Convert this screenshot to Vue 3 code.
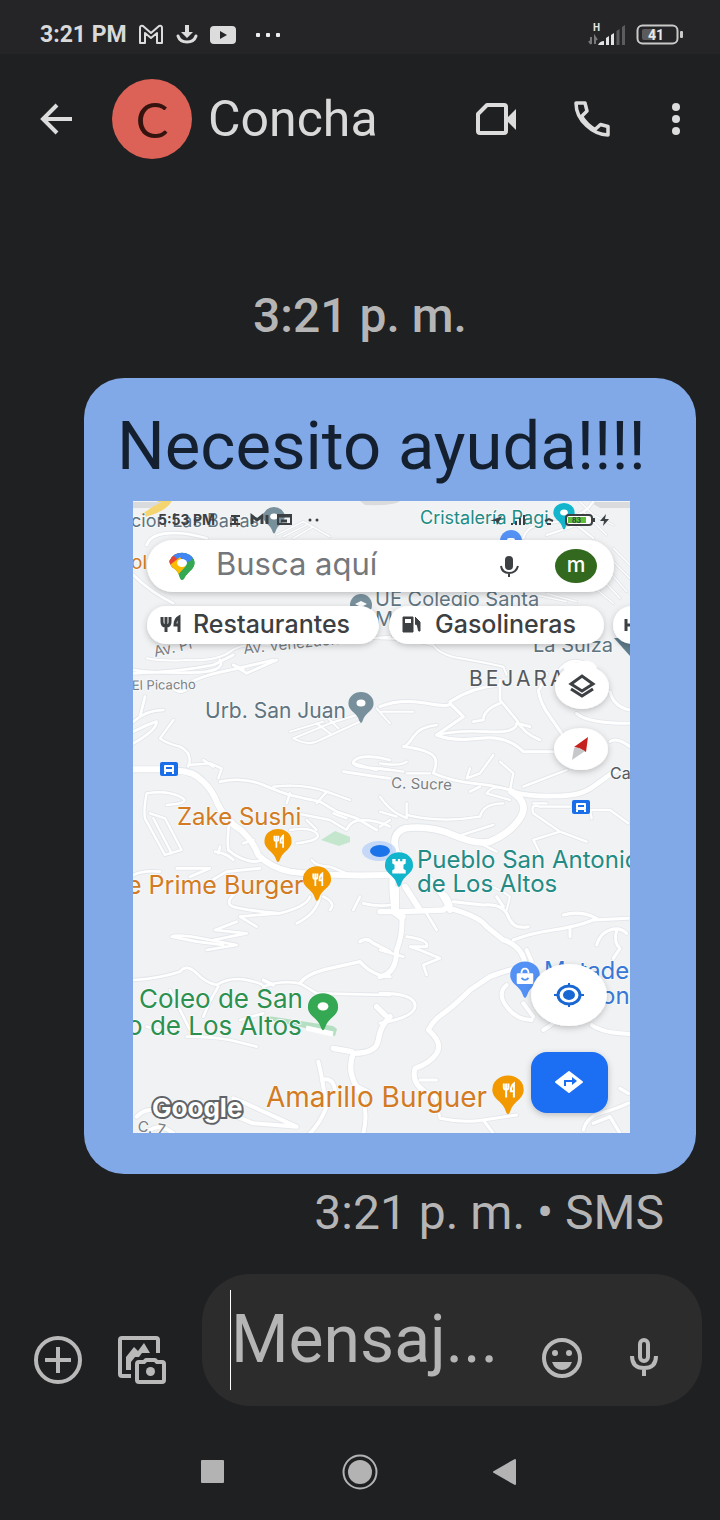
<script setup>
import { ref } from 'vue'

const draft = ref('')

const foodIcon = 'M-7 -9V-4Q-7 -1 -4 -1V9M-4 -9V-1M-1 -9V-4Q-1 -1 -4 -1M6 9V-9Q2 -6 2 1H6'

// Street network, split into sectors; each sector has its own origin on the map.
const sectors = [
  {
    x: 130, y: 495,
    roads: [
      { w: 8, d: 'M10 240Q60 290 130 325M50 150Q60 120 110 115T230 130' },
      { w: 6, d: 'M50 490Q100 500 170 495Q260 500 300 470T430 450L600 440L780 425' },
      { w: 8, d: 'M10 535Q150 530 250 510L310 480M310 510L350 535L440 495' },
      { w: 4, d: 'M440 120L520 80L600 125M460 125L530 90M490 130L550 95' },
    ],
  },
  {
    x: 380, y: 495,
    roads: [
      { w: 6, d: 'M0 430Q80 430 160 450Q180 480 240 490T370 515L380 540' },
      { w: 6, d: 'M430 130Q440 90 500 85T590 60Q620 50 640 20M500 120L590 90L640 130' },
      { w: 4, d: 'M470 300L560 320M500 295L590 320M600 20L640 60L700 90M610 50L680 120' },
      { w: 4, d: 'M700 160L750 210M690 190L750 250M680 220L740 290M665 250L720 310M640 275L700 325' },
      { w: 8, d: 'M530 535Q560 490 600 500T660 535' },
    ],
  },
  {
    x: 130, y: 660,
    roads: [
      { w: 18, d: 'M0 328H90M140 332Q190 332 220 365Q250 395 262 430Q290 485 335 512Q370 545 385 585Q420 622 480 635Q600 650 780 645' },
      { w: 8, d: 'M10 30Q70 40 180 38T270 0M180 68Q220 45 310 28L430 0M310 15L340 28M130 85Q150 105 175 85' },
      { w: 8, d: 'M45 110L30 170M10 185Q50 150 100 150M10 215Q60 190 80 185Q80 210 10 250' },
      { w: 7, d: 'M130 180L90 235Q110 250 150 260Q190 280 175 320M175 315L240 310L275 325L265 355M220 300L250 320' },
      { w: 8, d: 'M270 365Q340 350 400 375T480 405T570 425L620 455L680 475L740 510' },
      { w: 7, d: 'M430 380Q520 370 590 395L660 420M480 400L470 430M560 430L590 395M610 460L650 475M780 500Q740 480 700 480T650 510L600 480L500 460' },
      { w: 6, d: 'M490 235L600 190L680 165M490 235Q540 260 570 240L690 185M480 215L580 185M560 190L600 220M590 170L625 205M740 145L780 190' },
      { w: 8, d: 'M780 300Q700 280 675 300T740 325L780 330M640 335L740 350L780 355M670 310L740 330' },
      { w: 7, d: 'M50 400Q110 390 150 410T110 435M50 400Q40 450 45 475L105 585L155 570L105 475L60 460M70 475L125 580' },
      { w: 8, d: 'M300 475Q290 530 295 570Q330 600 370 605L410 600M340 550L370 540M255 575Q290 580 310 600M270 560L265 580' },
      { w: 7, d: 'M480 510Q540 500 560 520T500 550M530 480L560 510M545 600Q560 620 600 620L650 640' },
      { w: 8, d: 'M10 645Q40 630 90 635M140 625L240 625L180 650M230 670L290 635L390 625' },
    ],
  },
  {
    x: 380, y: 660,
    roads: [
      { w: 20, d: 'M50 580Q30 520 75 505Q150 495 220 525T330 545Q390 520 420 475T395 395' },
      { w: 14, d: 'M395 395Q450 410 520 408Q600 410 640 380T710 330' },
      { w: 9, d: 'M0 140Q60 115 140 130T210 125Q280 80 360 75M210 130L250 170L170 225Q220 245 300 235T430 275L520 275' },
      { w: 8, d: 'M170 225Q230 210 320 215T410 190M360 60L360 120L410 180Q430 220 480 240M360 130Q310 150 310 180L280 185M410 190L450 200' },
      { w: 8, d: 'M170 195Q120 200 100 230T70 260Q120 265 150 280T160 340Q220 365 280 370T395 390' },
      { w: 7, d: 'M0 310Q60 320 80 305M0 325L70 335M80 340L150 340M340 285L300 340L260 355M390 390L400 340L360 305M270 325L260 355M430 380L560 330' },
      { w: 9, d: 'M475 90Q480 130 510 170L545 220M480 85L500 40M590 160Q620 190 750 190M690 95Q700 140 750 150M690 245Q710 230 750 260' },
      { w: 7, d: 'M0 410Q20 440 50 460L80 475L80 430M0 455L50 470M80 465Q180 490 300 470Q310 430 370 430M0 500L30 480' },
      { w: 7, d: 'M570 440H480Q450 430 460 460L540 515L460 540L480 580M540 515L620 545M630 450L690 450L745 490M630 450L635 475M460 430L500 430' },
      { w: 7, d: 'M320 400Q340 370 385 390M320 400L390 420M270 395L300 380M230 530L340 495M290 545L350 575' },
      { w: 18, d: 'M55 580Q25 650 45 750M75 680L120 750M150 660Q190 700 210 750' },
      { w: 6, d: 'M300 670Q350 680 390 710L380 750M0 155L100 155' },
    ],
  },
  {
    x: 130, y: 890,
    roads: [
      { w: 8, d: 'M320 5Q280 40 310 50T450 70Q530 50 540 20M330 80Q370 75 450 70M320 95L255 120L350 130M330 80L380 110M350 130L250 150' },
      { w: 8, d: 'M125 140Q140 130 240 150L320 165L230 180M125 140L200 155L280 165M570 20Q560 70 500 100M580 20Q620 40 600 60M690 20L670 60M700 40Q740 50 780 45' },
      { w: 8, d: 'M10 270Q90 265 150 245Q170 220 200 250T260 285Q300 260 350 270T400 290Q450 270 510 280L560 310L780 315' },
      { w: 10, d: 'M510 280Q530 250 600 235L690 215Q730 260 780 260M690 155Q710 140 730 160L780 185M400 270L430 285' },
      { w: 8, d: 'M265 290Q240 330 220 380M120 300L180 420M170 440Q240 440 300 450L380 470M330 390L400 370M50 410L120 430' },
      { w: 16, d: 'M780 380Q750 410 745 450T670 490Q650 540 680 590L720 610M740 350L765 375M610 475L665 485' },
      { w: 12, d: 'M565 515L575 560L590 650Q570 700 540 730M575 570Q610 560 615 600M680 600Q720 650 700 730' },
      { w: 12, d: 'M310 625Q350 640 390 660L500 710L370 700L320 680M20 680Q50 650 80 665M60 720Q90 700 130 730' },
    ],
  },
  {
    x: 380, y: 890,
    roads: [
      { w: 24, d: 'M45 0V60M45 65L65 80' },
      { w: 16, d: 'M0 65H70M170 0Q200 10 210 45L190 60L65 65' },
      { w: 15, d: 'M65 75Q70 130 50 180Q50 250 0 260M210 55Q300 80 320 110L370 150Q430 170 435 225M435 230Q380 240 330 260L270 300Q220 350 190 370T145 420Q190 460 170 490T105 535Q90 590 165 620' },
      { w: 8, d: 'M80 140Q150 150 140 170H90L120 180L180 205L130 225L140 255M0 180L70 200M140 70L170 120' },
      { w: 9, d: 'M0 310Q100 310 105 345T0 400M0 360L20 375M220 35L310 45Q370 40 385 80T445 110M350 20L370 50' },
      { w: 9, d: 'M400 150Q450 130 520 120T640 90L745 85M550 75Q600 60 650 85M570 110V140M650 165Q660 130 690 120T740 130M710 120Q700 160 720 175L700 205' },
      { w: 12, d: 'M380 285Q350 310 380 350T455 390M440 180L455 215M430 340L460 380M520 400L490 420M635 405Q670 430 750 432' },
      { w: 9, d: 'M120 570H170M165 620L180 685Q250 700 310 690L410 675M310 690L340 730' },
      { w: 10, d: 'M610 720Q620 680 660 670T745 640M640 700L690 680L720 730M720 595L745 610' },
    ],
  },
]

const places = [
  { x: 205, y: 718, t: 'Urb. San Juan', c: 'slate', s: 21 },
  { x: 177, y: 825, t: 'Zake Sushi', c: 'orange', s: 24 },
  { x: 127, y: 894, t: 'e Prime Burger', c: 'orange', s: 25 },
  { x: 417, y: 868, t: 'Pueblo San Antonio', c: 'teal', s: 24 },
  { x: 417, y: 892, t: 'de Los Altos', c: 'teal', s: 24 },
  { x: 139, y: 1008, t: 'Coleo de San', c: 'green', s: 26 },
  { x: 127, y: 1035, t: 'o de Los Altos', c: 'green', s: 26 },
  { x: 266, y: 1107, t: 'Amarillo Burguer', c: 'orange', s: 28 },
  { x: 544, y: 979, t: 'Matade', c: 'blue', s: 24 },
  { x: 601, y: 1004, t: 'on', c: 'blue', s: 24 },
  { x: 375, y: 606, t: 'UE Colegio Santa', c: 'slate', s: 20 },
  { x: 375, y: 626, t: 'M', c: 'slate', s: 20 },
  { x: 533, y: 652, t: 'La Suiza', c: 'slate', s: 20 },
  { x: 420, y: 524, t: 'Cristalería Pagi', c: 'teal', s: 18 },
  { x: 131, y: 527, t: 'cion Las Banas', c: 'slate', s: 18 },
  { x: 131, y: 569, t: 'ol', c: 'orange', s: 19 },
  { x: 610, y: 779, t: 'Ca', c: 'gray', s: 16 },
]

const pins = [
  { x: 361, y: 706, k: 1, c: '#78909c', icon: 'dot' },
  { x: 278, y: 844, k: 1.08, c: '#f29900', icon: 'food' },
  { x: 317, y: 882, k: 1.12, c: '#f29900', icon: 'food' },
  { x: 508, y: 1093, k: 1.25, c: '#f29900', icon: 'food' },
  { x: 399, y: 868, k: 1.12, c: '#12b5cb', icon: 'rook' },
  { x: 323, y: 1010, k: 1.2, c: '#34a853', icon: 'dot' },
  { x: 525, y: 978, k: 1.18, c: '#5491f5', icon: 'bag' },
  { x: 274, y: 519, k: 0.85, c: '#78909c', icon: 'dot' },
  { x: 564, y: 515, k: 0.85, c: '#12b5cb', icon: 'dot' },
]
</script>

<template>
  <div class="phone">
    <div class="status">
      <time class="clock">3:21 PM</time>
      <svg class="st" width="26" height="22" viewBox="0 0 26 22" fill="none" stroke="#dcdcdd" stroke-width="2" stroke-linejoin="round"><path d="M2 19V4Q2 1 5 2L13 9L21 2Q24 1 24 4V19H19V9L13 14L7 9V19Z" /></svg>
      <svg class="st" width="22" height="22" viewBox="0 0 22 22"><path d="M9 1h4v7h4l-6 6-6-6h4z" fill="#dcdcdd" /><path d="M2 12Q4 18 11 18T20 12" fill="none" stroke="#dcdcdd" stroke-width="3" stroke-linecap="round" /></svg>
      <svg class="st" width="26" height="18" viewBox="0 0 26 18"><rect width="26" height="18" rx="4" fill="#dcdcdd" /><path d="M10 5l7 4-7 4z" fill="#252527" /></svg>
      <svg class="more" width="26" height="4" viewBox="0 0 26 4" fill="#f0f0f0"><rect width="4" height="4" rx="1" /><rect x="10" width="4" height="4" rx="1" /><rect x="20" width="4" height="4" rx="1" /></svg>
      <svg class="signal" width="40" height="24" viewBox="0 0 40 24">
        <text x="5" y="8" class="net">H</text>
        <path d="M3 14V21M1 18l2 3M7 21V14l2 3" fill="none" stroke="#77787a" stroke-width="2" />
        <path d="M10 22q2 -4 6 -4v4z" fill="#e4e4e4" />
        <path d="M18 22v-7l3-2v9zM23 22v-10l3-2v12z" fill="#e4e4e4" />
        <path d="M28.500 22V8l3-2v16zM34 22V4l3-2v20z" fill="#5c5c5e" />
      </svg>
      <svg class="battery" width="48" height="22" viewBox="0 0 48 22">
        <rect x="1.500" y="1.500" width="40" height="18" rx="5" fill="none" stroke="#c9c9ca" stroke-width="2" />
        <rect x="6" y="5" width="14" height="11" rx="2" fill="#5b5b5d" />
        <rect x="44" y="7" width="3" height="7" rx="1" fill="#c9c9ca" />
        <text x="20" y="16" text-anchor="middle" class="pct">41</text>
      </svg>
    </div>

    <header class="bar">
      <button class="icon back" aria-label="Atrás">
        <svg width="34" height="34" viewBox="0 0 34 34" fill="none" stroke="#dcdcdd" stroke-width="4"><path d="M32 17H4M17 3L3 17L17 31" /></svg>
      </button>
      <span class="avatar">C</span>
      <h1 class="name">Concha</h1>
      <button class="icon" aria-label="Videollamada">
        <svg width="42" height="34" viewBox="0 0 42 34"><path d="M11 3H28Q30 3 30 5V29Q30 31 28 31H4Q2 31 2 29V12Z" fill="none" stroke="#dcdcdd" stroke-width="4" stroke-linejoin="round" /><path d="M31 16l9-9v21l-9-9z" fill="#dcdcdd" /></svg>
      </button>
      <button class="icon call" aria-label="Llamar">
        <svg width="36" height="36" viewBox="0 0 36 36" fill="none" stroke="#dcdcdd" stroke-width="3.500" stroke-linejoin="round"><path d="M2 2H11L13 10L7.500 15.500Q13 24 21 28.500L26.500 23.500L34 25.500V34Q22 33.500 12.500 24.500Q2 15 2 2Z" /></svg>
      </button>
      <button class="icon menu" aria-label="Más opciones">
        <svg width="8" height="32" viewBox="0 0 8 32" fill="#dcdcdd"><circle cx="4" cy="4" r="4" /><circle cx="4" cy="16" r="4" /><circle cx="4" cy="28" r="4" /></svg>
      </button>
    </header>

    <main class="thread">
      <time class="stamp">3:21 p. m.</time>
      <article class="bubble">
        <p class="msg">Necesito ayuda!!!!</p>
        <svg class="photo" viewBox="133 501 497 632" role="img" aria-label="Mapa">
          <defs>
            <filter id="lift" x="-20%" y="-20%" width="140%" height="150%"><feDropShadow dx="0" dy="2" stdDeviation="3" flood-color="#000" flood-opacity="0.22" /></filter>
          </defs>
          <rect x="133" y="501" width="497" height="632" fill="#f0f2f4" />
          <path d="M146 515Q165 510 170 501H160Q150 512 144 514Z" fill="#f5d56f" stroke="#f5d56f" stroke-width="3" />
          <path d="M133 502H162L150 508H133ZM360 501H400Q395 506 365 505ZM590 502H630V508H600Z" fill="#dadbdd" />
          <g v-for="pass in ['casing', 'fill']" :key="pass" :class="pass">
            <g v-for="(s, i) in sectors" :key="i" :transform="`translate(${s.x} ${s.y}) scale(0.3333)`">
              <path v-for="(r, j) in s.roads" :key="j" :d="r.d" :stroke-width="pass === 'casing' ? r.w + 5 : r.w" />
            </g>
          </g>
          <path d="M321 840l14-9 15 6 0 5-11 4z" fill="#c3e6cd" />
          <path d="M268 1016l65 10 4 3-2 7-34-9-36-8z" fill="#b5dfc2" />
          <path d="M306 1028l27 6" stroke="#fff" stroke-width="5" />
          <circle cx="361" cy="605" r="11" fill="#78909c" /><path d="M355 604l6-3 6 3-6 3z" fill="#fff" />
          <circle cx="511" cy="541" r="11" fill="#5491f5" /><rect x="507" y="538" width="8" height="6" rx="2" fill="#fff" />
          <path d="M614 638h16v18z" fill="#607d8b" />

          <g>
            <text v-for="p in places" :key="p.t + p.y" :x="p.x" :y="p.y" :font-size="p.s" :class="['place', p.c]">{{ p.t }}</text>
            <text x="469" y="686" class="place gray town">BEJARANO</text>
            <text x="132" y="690" class="place street small" transform="rotate(-1 132 690)">El Picacho</text>
            <text x="391" y="788" class="place street" transform="rotate(2 391 788)">C. Sucre</text>
            <text x="155" y="657" class="place street" transform="rotate(-13 155 657)">Av. Pr</text>
            <text x="244" y="654" class="place street" transform="rotate(-6 244 654)">Av. Venezuela</text>
            <text x="137" y="1131" class="place street" transform="rotate(9 137 1131)">C. 7</text>
          </g>

          <g v-for="b in [[169, 769], [581, 807]]" :key="b[0]" :transform="`translate(${b[0]} ${b[1]})`">
            <rect x="-9" y="-7" width="18" height="14" rx="2" fill="#1a6fe8" />
            <rect x="-5" y="-4" width="10" height="7" rx="1" fill="#fff" />
            <path d="M-3 -2H3V0H-3Z" fill="#1a6fe8" />
            <path d="M-4 3v2M4 3v2" stroke="#fff" stroke-width="2" />
          </g>

          <ellipse cx="379" cy="851" rx="17" ry="10" fill="#a8c7fa" opacity="0.600" />
          <ellipse cx="380" cy="851" rx="10" ry="6" fill="#1a73e8" />

          <g v-for="p in pins" :key="p.x" :transform="`translate(${p.x} ${p.y}) scale(${p.k})`">
            <path d="M0 17Q-1 17 -2 14Q-3 10 -9 5Q-13 1 -12.500 -3A12.500 11 0 0 1 12.500 -3Q13 1 9 5Q3 10 2 14Q1 17 0 17Z" :fill="p.c" />
            <ellipse v-if="p.icon === 'dot'" cy="-3" rx="4.500" ry="3.500" fill="#fff" />
            <path v-else-if="p.icon === 'food'" :d="foodIcon" transform="translate(1 -2) scale(0.620)" fill="none" stroke="#fff" stroke-width="2.600" />
            <path v-else-if="p.icon === 'rook'" d="M-6 -8h3v2h2v-2h2v2h2v-2h3v4l-2 1v4l2 1v3H-6V2l2-1v-4l-2-1z" fill="#fff" />
            <g v-else><rect x="-7" y="-4" width="14" height="9" rx="1" fill="#fff" /><path d="M-3 -4Q-3 -8 0 -8T3 -4" fill="none" stroke="#fff" stroke-width="1.500" /><path d="M-3 0Q0 3 3 0" fill="none" stroke="#5491f5" stroke-width="1.500" /></g>
          </g>

          <g class="shotbar">
            <text x="158" y="525">5:53 PM</text>
            <path d="M231 516h9M235 516v8M230 524h10M232 520h6" stroke="#3c4043" stroke-width="2" />
            <path d="M252 524v-8l5 4 5-4v8M267 515v9" fill="none" stroke="#3c4043" stroke-width="3" />
            <path d="M278 515h13v9h-13z" fill="none" stroke="#3c4043" stroke-width="2" /><path d="M278 516h13M281 521h6" stroke="#3c4043" stroke-width="3" />
            <circle cx="310" cy="520" r="1.500" /><circle cx="317" cy="520" r="1.500" />
            <path d="M490 521l12-5-5 9-1-4z" />
            <path d="M512 525v-2M516 525v-4M520 525v-7M524 525v-10" stroke="#3c4043" stroke-width="2" />
            <path d="M545 521l4-2 4 2M547 524h4" fill="none" stroke="#3c4043" stroke-width="2" />
            <rect x="566" y="515" width="26" height="10" rx="3" fill="#fff" stroke="#3c4043" stroke-width="2" />
            <rect x="568" y="517" width="18" height="6" fill="#5bbf3a" />
            <text x="572" y="523" class="tiny">83</text>
            <path d="M594 518v4" stroke="#3c4043" stroke-width="2" /><path d="M606 514l-6 7h4l-1 5 6-7h-4z" />
          </g>

          <g filter="url(#lift)" fill="#fff">
            <rect x="147" y="540" width="467" height="52" rx="26" />
            <rect x="147" y="606" width="232" height="38" rx="19" />
            <rect x="389" y="606" width="215" height="38" rx="19" />
            <rect x="613" y="606" width="60" height="38" rx="19" />
            <ellipse cx="582" cy="687" rx="27" ry="22" />
            <ellipse cx="581" cy="749" rx="27" ry="21" />
            <ellipse cx="569" cy="995" rx="38" ry="31" />
          </g>
          <path d="M563 668Q568 659 577 663Q590 657 597 667L590 675H568Z" fill="#fff" />

          <g>
            <clipPath id="gpin"><path d="M182 580Q180 580 179 575Q177 570 172 567Q168 561 170 560A12.500 10 0 0 1 194 560Q196 566 190 571Q185 576 184 579Q183 580 182 580Z" /></clipPath>
            <g clip-path="url(#gpin)">
              <rect x="168" y="550" width="28" height="31" fill="#34a853" />
              <path d="M166 550H178L182 562L168 572Z" fill="#ea4335" />
              <path d="M174 550H196V559L182 564L174 556Z" fill="#4285f4" />
              <path d="M194 557L198 562L190 572L182 580L178 574Z" fill="#34a853" />
              <path d="M166 568L180 557L186 566L174 579Z" fill="#fbbc04" />
              <ellipse cx="182" cy="563" rx="5" ry="4" fill="#fff" />
            </g>
          </g>
          <text x="216" y="575" class="hint">Busca aquí</text>
          <path d="M509 556a4 4 0 0 1 4 4v6a4 4 0 0 1-8 0v-6a4 4 0 0 1 4-4z" fill="#3c4043" />
          <path d="M501 566Q502 573 509 573T518 566M509 573v4" fill="none" stroke="#3c4043" stroke-width="2" />
          <ellipse cx="576" cy="566" rx="21" ry="17" fill="#33691e" />
          <text x="576" y="572" text-anchor="middle" class="initial">m</text>

          <path d="M162 617v5q0 4 4 4t4-4v-5M166 617v15M179 632v-15q-4 2-4 8h4" fill="none" stroke="#3c4043" stroke-width="3" />
          <text x="193" y="633" class="chip">Restaurantes</text>
          <path d="M403 617h10v15h-10zM415 624q3 0 3 4t2 3v-9l-5-5" fill="#3c4043" stroke="#3c4043" stroke-width="1" /><rect x="405" y="619" width="6" height="4" fill="#fff" />
          <text x="435" y="633" class="chip">Gasolineras</text>
          <path d="M626 619v12M626 625h4" stroke="#3c4043" stroke-width="3" />

          <path d="M571 684l11-8 11 8-11 7zM571 689l11 7 11-7" fill="none" stroke="#3c4043" stroke-width="3" />
          <path d="M588 737l-14 10 5 1 7 4z" fill="#c5221f" /><path d="M574 748l-2 12 13-9-6-3z" fill="#c6c8ca" />
          <ellipse cx="569" cy="995" rx="11" ry="9" fill="none" stroke="#1967d2" stroke-width="3" />
          <ellipse cx="569" cy="995" rx="6" ry="5" fill="#1967d2" />
          <path d="M569 983v4M569 1003v4M554 995h4M580 995h4" stroke="#1967d2" stroke-width="2" />
          <rect x="531" y="1052" width="77" height="61" rx="16" fill="#1b6ef3" filter="url(#lift)" />
          <path d="M569 1072l13 10-13 10-13-10z" fill="#fff" stroke="#fff" stroke-width="2" stroke-linejoin="round" />
          <path d="M565 1086v-5h9" fill="none" stroke="#1b6ef3" stroke-width="2" /><path d="M572 1077l5 4-5 4z" fill="#1b6ef3" />
          <text x="152" y="1117" class="google">Google</text>
        </svg>
      </article>
      <p class="receipt">3:21 p. m. • SMS</p>
    </main>

    <form class="composer" @submit.prevent>
      <button type="button" class="icon add" aria-label="Adjuntar">
        <svg width="48" height="48" viewBox="0 0 48 48" fill="none" stroke="#b9b9ba" stroke-width="4"><circle cx="24" cy="24" r="22" /><path d="M11 24H37M24 11V37" /></svg>
      </button>
      <button type="button" class="icon gallery" aria-label="Galería">
        <svg width="48" height="48" viewBox="0 0 48 48" fill="none" stroke="#b9b9ba" stroke-width="4" stroke-linejoin="round">
          <path d="M13 40H4Q2 40 2 38V4Q2 2 4 2H38Q40 2 40 4V17" />
          <path d="M8 34V21L16 11L20 15L26 7L32 17H24L21 21H17L13 26V34Z" fill="#b9b9ba" stroke="none" />
          <path d="M19 28Q19 26 21 26H26L28 24H37L39 26H44Q46 26 46 28V44Q46 46 44 46H21Q19 46 19 44Z" /><circle cx="32.500" cy="35.500" r="4.500" fill="#b9b9ba" stroke="none" />
        </svg>
      </button>
      <div class="field">
        <span class="caret"></span>
        <input v-model="draft" class="entry" type="text" placeholder="Mensaj..." aria-label="Mensaje" />
        <button type="button" class="icon" aria-label="Emojis">
          <svg width="40" height="40" viewBox="0 0 40 40"><circle cx="20" cy="20" r="18" fill="none" stroke="#b9b9ba" stroke-width="4" /><circle cx="13" cy="15" r="3" fill="#b9b9ba" /><circle cx="27" cy="15" r="3" fill="#b9b9ba" /><path d="M10 24H30Q27 32 20 32T10 24Z" fill="#b9b9ba" /></svg>
        </button>
        <button type="button" class="icon mic" aria-label="Mensaje de voz">
          <svg width="28" height="40" viewBox="0 0 28 40" fill="none" stroke="#b9b9ba" stroke-width="4"><rect x="10" y="2" width="8" height="21" rx="4" /><path d="M2 18Q2 30 14 30T26 18M14 30V38" /></svg>
        </button>
      </div>
    </form>

    <nav class="keys" aria-label="Sistema">
      <button class="icon" aria-label="Recientes"><svg width="36" height="36" viewBox="0 0 36 36"><rect x="7" y="6" width="23" height="23" rx="1" fill="#b3b3b4" /></svg></button>
      <button class="icon" aria-label="Inicio"><svg width="36" height="36" viewBox="0 0 36 36"><circle cx="18" cy="18" r="16.500" fill="none" stroke="#b3b3b4" stroke-width="2" /><circle cx="18" cy="18" r="12" fill="#b3b3b4" /></svg></button>
      <button class="icon" aria-label="Volver"><svg width="36" height="36" viewBox="0 0 36 36"><path d="M4 18L25 6V30Z" fill="#b3b3b4" stroke="#b3b3b4" stroke-width="2" stroke-linejoin="round" /></svg></button>
    </nav>
  </div>
</template>

<style>
body {
  background: #1f2022;
}
</style>

<style scoped>
.phone {
  display: flex;
  flex-direction: column;
  min-height: 100vh;
  box-sizing: border-box;
  background: #1f2022;
  color: #d9d9da;
  font-family: Roboto, "Noto Sans", sans-serif;
}
.icon {
  display: flex;
  padding: 0;
  border: 0;
  background: none;
}
.status {
  display: flex;
  align-items: center;
  height: 54px;
  box-sizing: border-box;
  padding: 16px 36px 0 40px;
  background: #252527;
}
.clock {
  font-size: 23px;
  line-height: 36px;
  font-weight: 700;
  margin-right: 11px;
}
.st {
  margin-right: 12px;
}
.more {
  margin-left: 8px;
}
.signal {
  margin-left: auto;
  margin-right: 8px;
}
.net {
  font: 700 10px Roboto, sans-serif;
  fill: #e4e4e4;
}
.pct {
  font: 700 14px Roboto, sans-serif;
  fill: #e8e8e8;
}
.bar {
  display: flex;
  align-items: center;
  height: 130px;
  padding: 0 40px;
}
.back {
  margin-right: 38px;
}
.avatar {
  width: 80px;
  height: 80px;
  border-radius: 50%;
  background: #dc6156;
  color: #35130f;
  font: 400 49px/80px Lato, sans-serif;
  text-align: center;
  margin-right: 16px;
}
.name {
  flex: 1;
  margin: 0;
  font-size: 50px;
  line-height: 60px;
  font-weight: 400;
}
.call {
  margin-left: 56px;
}
.menu {
  margin-left: 62px;
}
.thread {
  display: flex;
  flex-direction: column;
  padding: 102px 24px 0 84px;
}
.stamp {
  align-self: center;
  margin-right: 60px;
  font-size: 48px;
  line-height: 60px;
  font-weight: 500;
  color: #b5b5b6;
}
.bubble {
  margin-top: 32px;
  padding: 28px 0 41px;
  border-radius: 40px;
  background: #81a8e7;
}
.msg {
  margin: 0 33px 15px;
  font-size: 67px;
  line-height: 80px;
  color: #14202f;
  white-space: nowrap;
}
.photo {
  display: block;
  width: calc(100% - 115px);
  margin-left: 49px;
}
.casing path,
.fill path {
  fill: none;
  stroke-linecap: round;
  stroke-linejoin: round;
}
.casing path {
  stroke: #e3e6ea;
}
.fill path {
  stroke: #fff;
}
.place {
  font-family: Inter, sans-serif;
  paint-order: stroke;
  stroke: #f7f8f9;
  stroke-width: 2px;
}
.slate { fill: #5f7480; }
.orange { fill: #d27b23; }
.teal { fill: #228b85; }
.green { fill: #2c9150; }
.blue { fill: #3878d6; }
.gray { fill: #55595d; }
.town { font-size: 21px; letter-spacing: 3px; }
.street { font-size: 15px; fill: #7b7f83; }
.small { font-size: 13px; }
.shotbar {
  fill: #3c4043;
}
.shotbar text {
  font: 700 14px Inter, sans-serif;
}
.shotbar .tiny {
  font-size: 7px;
}
.hint {
  font: 400 31px Inter, sans-serif;
  fill: #74777b;
}
.initial {
  font: 500 21px Inter, sans-serif;
  fill: #fff;
}
.chip {
  font: 500 25px Inter, sans-serif;
  fill: #3c4043;
}
.google {
  font: 700 26px Inter, sans-serif;
  fill: #fff;
  stroke: #606468;
  stroke-width: 4px;
  paint-order: stroke;
}
.receipt {
  align-self: flex-end;
  margin: 9px 32px 0 0;
  font-size: 48px;
  line-height: 60px;
  color: #b5b5b6;
}
.composer {
  display: flex;
  align-items: flex-end;
  padding: 31px 18px 0 34px;
}
.add,
.gallery {
  margin-bottom: 22px;
}
.gallery {
  margin: 0 36px 22px;
}
.field {
  display: flex;
  flex: 1;
  min-width: 0;
  align-items: center;
  height: 132px;
  box-sizing: border-box;
  padding: 0 44px 0 28px;
  border-radius: 48px;
  background: #2c2c2d;
}
.caret {
  width: 1px;
  height: 100px;
  background: #fff;
}
.field .icon {
  margin-top: 36px;
}
.field .mic {
  margin-left: 48px;
}
.entry {
  flex: 1;
  min-width: 0;
  padding: 0;
  border: 0;
  outline: 0;
  background: none;
  color: #d9d9da;
  font: 400 66px/100px Roboto, sans-serif;
}
.entry::placeholder {
  color: #b5b5b6;
  opacity: 1;
}
.keys {
  display: flex;
  justify-content: center;
  gap: 112px;
  padding: 48px 0 28px;
}
</style>
